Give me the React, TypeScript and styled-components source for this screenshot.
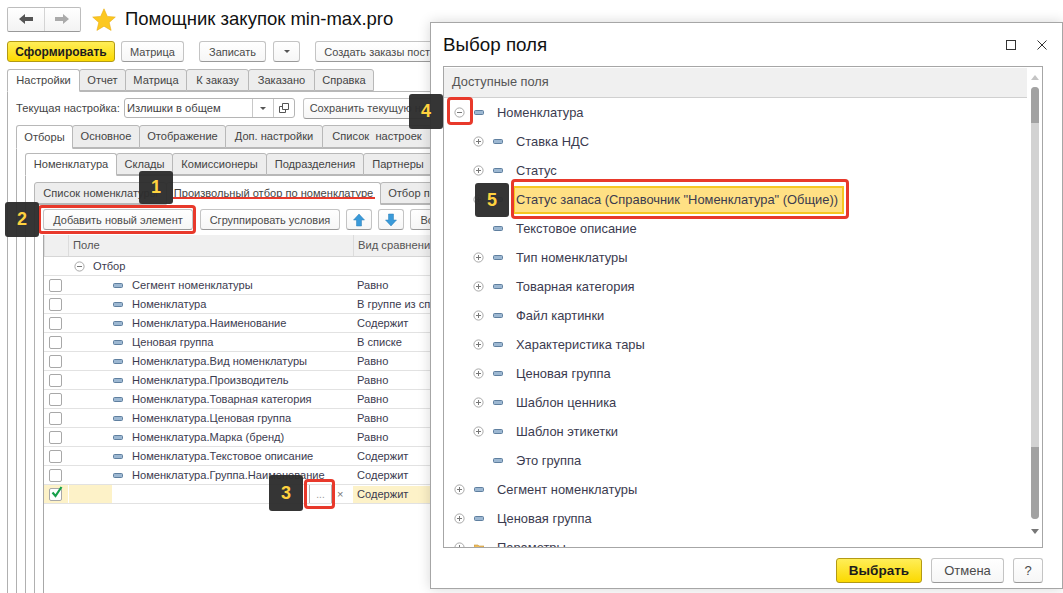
import React from 'react';
import styled, { createGlobalStyle, css } from 'styled-components';

const Global = createGlobalStyle`
  html, body { margin: 0; padding: 0; background: #fff; }
  body { font-family: "Liberation Sans", Arial, sans-serif; color: #3b3b4f; }
  * { box-sizing: border-box; }
`;

const Page = styled.div`
  position: relative;
  width: 1063px;
  height: 593px;
  overflow: hidden;
  background: #fff;
  padding: 7px 0 0 7px;
`;
const Header = styled.header`
  display: flex;
  align-items: center;
  height: 24px;
`;
const NavGroup = styled.div`
  display: flex;
  width: 74px;
  height: 25px;
  border: 1px solid #bdbdbd;
  border-bottom-color: #999;
  border-radius: 2px;
  background: linear-gradient(#fff, #f3f3f3);
`;
const NavButton = styled.div`
  flex: 1;
  display: flex;
  align-items: center;
  justify-content: center;
  & + & { border-left: 1px solid #d4d4d4; }
`;
const StarWrap = styled.div`
  display: flex;
  margin-left: 11px;
`;
const Title = styled.h1`
  margin: 0 0 0 9px;
  font-weight: 400;
  font-size: 18.5px;
  color: #111;
  white-space: nowrap;
`;
const Toolbar = styled.div`
  display: flex;
  margin-top: 10px;
  height: 21px;
`;
const Button = styled.div<{ $w: number; $ml?: number }>`
  flex: none;
  display: flex;
  align-items: center;
  justify-content: center;
  width: ${p => p.$w}px;
  height: 21px;
  margin-left: ${p => p.$ml ?? 0}px;
  border: 1px solid #c4c4c4;
  border-bottom-color: #9a9a9a;
  border-radius: 3px;
  background: linear-gradient(#fff, #f6f6f6);
  font-size: 11px;
  color: #4a4a4a;
  white-space: nowrap;
  overflow: hidden;
`;
const PrimaryButton = styled.div<{ $w: number; $h: number; $fs: number }>`
  flex: none;
  display: flex;
  align-items: center;
  justify-content: center;
  width: ${p => p.$w}px;
  height: ${p => p.$h}px;
  border: 1px solid #b39a14;
  border-radius: 3px;
  background: linear-gradient(#ffee58, #fbd900);
  font-weight: 700;
  font-size: ${p => p.$fs}px;
  color: #1c1c1c;
`;
const Caret = styled.span`
  width: 0;
  height: 0;
  border-left: 3px solid transparent;
  border-right: 3px solid transparent;
  border-top: 3px solid #555;
`;
const Tabs = styled.div<{ $mt: number; $h: number }>`
  display: flex;
  margin-top: ${p => p.$mt}px;
  height: ${p => p.$h}px;
  width: 1000px;
  position: relative;
  z-index: 1;
`;
const Tab = styled.div<{ $w: number; $active?: boolean }>`
  flex: none;
  display: flex;
  align-items: center;
  justify-content: center;
  width: ${p => p.$w}px;
  margin-right: -1px;
  padding-bottom: 1px;
  border: 1px solid #b8b8b8;
  border-radius: 3px 3px 0 0;
  font-size: 11.1px;
  color: #444;
  white-space: pre;
  overflow: hidden;
  ${p =>
    p.$active
      ? css`
          background: #fff;
          border-bottom: 1px solid #fff;
          height: calc(100% + 1px);
        `
      : css`
          background: #ededed;
          height: 100%;
        `}
`;
const Frame = styled.div<{ $pt: number }>`
  border-left: 1px solid #b0b0b0;
  border-top: 1px solid #b8b8b8;
  padding: ${p => p.$pt}px 0 0 8px;
  height: 600px;
`;
const SettingRow = styled.div`
  display: flex;
  align-items: center;
  height: 20px;
`;
const SettingLabel = styled.span`
  width: 108px;
  font-size: 11.2px;
  color: #444;
  white-space: nowrap;
`;
const Select = styled.div`
  display: flex;
  width: 171px;
  height: 20px;
  border: 1px solid #b5b5b5;
  border-radius: 3px;
  font-size: 11.2px;
  color: #444;
`;
const SelectValue = styled.div`
  flex: 1;
  padding-left: 2px;
  line-height: 18px;
`;
const SelectCell = styled.div`
  width: 21px;
  display: flex;
  align-items: center;
  justify-content: center;
  border-left: 1px solid #c8c8c8;
`;
const Actions = styled.div`
  display: flex;
  height: 21px;
`;
const Table = styled.div`
  margin-top: 5px;
  border-left: 1px solid #a8a8a8;
  height: 400px;
  width: 400px;
`;
const TableHead = styled.div`
  display: grid;
  grid-template-columns: 24px 285px 1fr;
  height: 22px;
  background: #f0f0f0;
  font-size: 11.2px;
  color: #555;
  border-bottom: 1px solid #d6d6d6;
`;
const HeadCell = styled.div<{ $pl?: number }>`
  padding-left: ${p => p.$pl ?? 0}px;
  line-height: 20px;
  border-left: 1px solid #dcdcdc;
  white-space: nowrap;
  overflow: hidden;
`;
const GroupRow = styled.div`
  display: flex;
  align-items: center;
  gap: 8px;
  height: 19px;
  padding-left: 30px;
  font-size: 11.1px;
  border-bottom: 1px solid #e2e2e2;
`;
const Row = styled.div`
  display: grid;
  grid-template-columns: 24px 285px 1fr;
  align-items: center;
  height: 19px;
  font-size: 11.1px;
  white-space: nowrap;
  border-bottom: 1px solid #e2e2e2;
`;
const CheckCell = styled.div<{ $editing?: boolean }>`
  display: flex;
  align-items: center;
  justify-content: center;
  height: 100%;
  padding-right: 1px;
  background: ${p => (p.$editing ? '#fdf2c8' : 'transparent')};
`;
const CheckBox = styled.div`
  position: relative;
  width: 13px;
  height: 13px;
  border: 1px solid #a8a8a8;
  border-radius: 2px;
  background: #fff;
`;
const CheckMark = styled.svg`
  position: absolute;
  left: 0;
  top: -4px;
`;
const FieldCell = styled.div`
  display: flex;
  align-items: center;
  padding-left: 45px;
  gap: 9px;
`;
const CompareCell = styled.div<{ $editing?: boolean }>`
  padding-left: 4px;
  line-height: 17px;
  background: ${p => (p.$editing ? '#fdf2c8' : 'transparent')};
`;
const EditCell = styled.div`
  display: flex;
  align-items: center;
  height: 100%;
`;
const EditYellow = styled.div`
  width: 43px;
  height: 100%;
  margin-left: 1px;
  background: #fdf2c8;
`;
const PickButton = styled.div`
  width: 23px;
  height: 18px;
  margin-left: 197px;
  border-left: 1px solid #b4b4b4;
  border-right: 1px solid #b4b4b4;
  text-align: center;
  font-size: 10px;
  color: #999;
  line-height: 20px;
`;
const Clear = styled.span`
  margin-left: 5px;
  font-size: 11px;
  color: #777;
`;
const Dialog = styled.section`
  position: absolute;
  left: 430px;
  top: 22px;
  width: 633px;
  height: 567px;
  display: flex;
  flex-direction: column;
  padding: 0 19px 0 12px;
  background: #fff;
  border: 1px solid #a6a6a6;
  box-shadow: 0 0 12px rgba(0, 0, 0, 0.16);
  z-index: 2;
`;
const DialogTop = styled.div`
  display: flex;
  align-items: center;
  justify-content: space-between;
  height: 43px;
  flex: none;
`;
const DialogTitle = styled.h2`
  margin: 0;
  font-weight: 400;
  font-size: 18.8px;
  color: #111;
`;
const WindowButtons = styled.div`
  display: flex;
  align-items: center;
  gap: 21px;
  margin-right: -4px;
`;
const Panel = styled.div`
  position: relative;
  display: flex;
  height: 482px;
  flex: none;
  border: 1px solid #a6a6a6;
  overflow: hidden;
`;
const TreeArea = styled.div`
  flex: 1;
  min-width: 0;
`;
const TreeHead = styled.div`
  height: 30px;
  margin-top: 1px;
  padding-left: 8px;
  background: #f0f0f0;
  border-bottom: 1px solid #d0d0d0;
  font-size: 12.8px;
  line-height: 28px;
  color: #555;
`;
const TreeRow = styled.div<{ $level: number }>`
  display: flex;
  align-items: center;
  height: 29px;
  padding-left: ${p => 10 + p.$level * 19}px;
  font-size: 12.9px;
  white-space: nowrap;
`;
const Expander = styled.div`
  width: 13px;
  flex: none;
  display: flex;
`;
const NodeIcon = styled.div`
  width: 30px;
  flex: none;
  display: flex;
  padding-left: 7px;
`;
const NodeText = styled.span<{ $selected?: boolean }>`
  margin-left: ${p => (p.$selected ? -3 : 0)}px;
  ${p =>
    p.$selected &&
    css`
      display: block;
      width: 331px;
      height: 28px;
      padding-left: 1px;
      line-height: 24px;
      border: 2px solid #f6c622;
      background: #ffe084;
    `}
`;
const Scrollbar = styled.div`
  position: relative;
  width: 15px;
  flex: none;
  padding-top: 8px;
  display: flex;
  flex-direction: column;
  align-items: center;
`;
const ScrollArrow = styled.span<{ $down?: boolean }>`
  width: 0;
  height: 0;
  border-left: 4px solid transparent;
  border-right: 4px solid transparent;
  ${p =>
    p.$down
      ? css`
          margin-top: 10px;
          border-top: 5px solid #777;
        `
      : css`
          margin-bottom: 7px;
          border-bottom: 5px solid #c4c4c4;
        `}
`;
const ScrollTrack = styled.div`
  width: 8px;
  height: 432px;
  border-radius: 4px;
  overflow: hidden;
  background: #d2d2d2;
`;
const ScrollThumb = styled.div<{ $h: number; $mt?: number }>`
  height: ${p => p.$h}px;
  margin-top: ${p => p.$mt ?? 0}px;
  background: #a2a2a2;
`;
const Footer = styled.div`
  display: flex;
  justify-content: flex-end;
  gap: 9px;
  margin-top: 10px;
`;
const DialogButton = styled.div<{ $w: number }>`
  display: flex;
  align-items: center;
  justify-content: center;
  width: ${p => p.$w}px;
  height: 25px;
  border: 1px solid #c4c4c4;
  border-bottom-color: #9a9a9a;
  border-radius: 3px;
  background: linear-gradient(#fff, #f6f6f6);
  font-size: 13px;
  color: #4a4a4a;
`;
const Callout = styled.div<{ $x: number; $y: number; $h: number }>`
  position: absolute;
  left: ${p => p.$x}px;
  top: ${p => p.$y}px;
  width: 34px;
  height: ${p => p.$h}px;
  display: flex;
  align-items: center;
  justify-content: center;
  border-radius: 3px;
  background: rgba(45, 45, 45, 0.96);
  color: #ffd23f;
  font-weight: 700;
  font-size: 18px;
  z-index: 5;
`;
const RedBox = styled.div<{ $x: number; $y: number; $w: number; $h: number }>`
  position: absolute;
  left: ${p => p.$x}px;
  top: ${p => p.$y}px;
  width: ${p => p.$w}px;
  height: ${p => p.$h}px;
  border: 3px solid #e8392b;
  border-radius: 4px;
  z-index: 4;
`;
const RedLine = styled.div`
  position: absolute;
  left: 173px;
  top: 197px;
  width: 202px;
  height: 2px;
  background: #e8392b;
  z-index: 4;
`;

const PlusIcon = () => (
  <svg width="11" height="11" viewBox="0 0 11 11">
    <circle cx="5.5" cy="5.5" r="4.6" fill="#fff" stroke="#a8a8a8" />
    <path d="M3 5.5h5M5.5 3v5" stroke="#777" />
  </svg>
);

const MinusIcon = () => (
  <svg width="11" height="11" viewBox="0 0 11 11">
    <circle cx="5.5" cy="5.5" r="4.6" fill="#fff" stroke="#a8a8a8" />
    <path d="M3 5.5h5" stroke="#777" />
  </svg>
);

const FieldIcon = () => (
  <svg width="10" height="5" viewBox="0 0 10 5">
    <rect x="0.5" y="0.5" width="9" height="4" rx="1" fill="#9db8d2" stroke="#5f7f9f" />
  </svg>
);

const FolderIcon = () => (
  <svg width="10" height="8" viewBox="0 0 10 8">
    <path d="M0 1h4l1 1h5v6H0z" fill="#eebd5c" stroke="#c8953a" strokeWidth="0.6" />
  </svg>
);

const ArrowIcon = ({ dir }: { dir: 'up' | 'down' }) => (
  <svg width="12" height="14" viewBox="0 0 12 14">
    <path
      d={dir === 'up' ? 'M6 1l5.5 6H8.5v6h-5V7H.5z' : 'M6 13L.5 7h3V1h5v6h3z'}
      fill="#3a9ad9"
      stroke="#2b7fb8"
      strokeWidth="0.5"
    />
  </svg>
);

const topTabs = [
  { t: 'Настройки', w: 73, active: true },
  { t: 'Отчет', w: 47 },
  { t: 'Матрица', w: 62 },
  { t: 'К заказу', w: 63 },
  { t: 'Заказано', w: 67 },
  { t: 'Справка', w: 60 },
];
const settingTabs = [
  { t: 'Отборы', w: 57, active: true },
  { t: 'Основное', w: 68 },
  { t: 'Отображение', w: 87 },
  { t: 'Доп. настройки', w: 98 },
  { t: 'Список  настроек', w: 110 },
];
const filterTabs = [
  { t: 'Номенклатура', w: 92, active: true },
  { t: 'Склады', w: 57 },
  { t: 'Комиссионеры', w: 95 },
  { t: 'Подразделения', w: 98 },
  { t: 'Партнеры', w: 70 },
];
const subTabs = [
  { t: 'Список номенклатуры', w: 133 },
  { t: 'Произвольный отбор по номенклатуре', w: 215, active: true },
  { t: 'Отбор по', w: 64 },
];

const filterRows = [
  ['Сегмент номенклатуры', 'Равно'],
  ['Номенклатура', 'В группе из списка'],
  ['Номенклатура.Наименование', 'Содержит'],
  ['Ценовая группа', 'В списке'],
  ['Номенклатура.Вид номенклатуры', 'Равно'],
  ['Номенклатура.Производитель', 'Равно'],
  ['Номенклатура.Товарная категория', 'Равно'],
  ['Номенклатура.Ценовая группа', 'Равно'],
  ['Номенклатура.Марка (бренд)', 'Равно'],
  ['Номенклатура.Текстовое описание', 'Содержит'],
  ['Номенклатура.Группа.Наименование', 'Содержит'],
];

type TreeItem = {
  text: string;
  level: number;
  mark?: 'plus' | 'minus';
  folder?: boolean;
  selected?: boolean;
};

const treeItems: TreeItem[] = [
  { text: 'Номенклатура', level: 0, mark: 'minus' },
  { text: 'Ставка НДС', level: 1, mark: 'plus' },
  { text: 'Статус', level: 1, mark: 'plus' },
  { text: 'Статус запаса (Справочник "Номенклатура" (Общие))', level: 1, mark: 'plus', selected: true },
  { text: 'Текстовое описание', level: 1 },
  { text: 'Тип номенклатуры', level: 1, mark: 'plus' },
  { text: 'Товарная категория', level: 1, mark: 'plus' },
  { text: 'Файл картинки', level: 1, mark: 'plus' },
  { text: 'Характеристика тары', level: 1, mark: 'plus' },
  { text: 'Ценовая группа', level: 1, mark: 'plus' },
  { text: 'Шаблон ценника', level: 1, mark: 'plus' },
  { text: 'Шаблон этикетки', level: 1, mark: 'plus' },
  { text: 'Это группа', level: 1 },
  { text: 'Сегмент номенклатуры', level: 0, mark: 'plus' },
  { text: 'Ценовая группа', level: 0, mark: 'plus' },
  { text: 'Параметры', level: 0, mark: 'plus', folder: true },
];

function TabBar({ items, mt, h }: { items: { t: string; w: number; active?: boolean }[]; mt: number; h: number }) {
  return (
    <Tabs $mt={mt} $h={h}>
      {items.map(item => (
        <Tab key={item.t} $w={item.w} $active={item.active}>
          {item.t}
        </Tab>
      ))}
    </Tabs>
  );
}

export default function App() {
  return (
    <Page>
      <Global />
      <Header>
        <NavGroup>
          <NavButton>
            <svg width="14" height="10" viewBox="0 0 14 10">
              <path d="M0 5l6-5v3h8v4H6v3z" fill="#555" />
            </svg>
          </NavButton>
          <NavButton>
            <svg width="14" height="10" viewBox="0 0 14 10">
              <path d="M14 5L8 0v3H0v4h8v3z" fill="#aaa" />
            </svg>
          </NavButton>
        </NavGroup>
        <StarWrap>
          <svg width="24" height="23" viewBox="0 0 24 23">
            <path
              d="M12 .8l3.3 7.6 8 .7-6.1 5.3 1.9 8L12 18.2l-7.1 4.2 1.9-8L.7 9.1l8-.7z"
              fill="#fcc820"
              stroke="#e9ad12"
              strokeWidth="0.6"
            />
          </svg>
        </StarWrap>
        <Title>Помощник закупок min-max.pro</Title>
      </Header>

      <Toolbar>
        <PrimaryButton $w={108} $h={21} $fs={12}>Сформировать</PrimaryButton>
        <Button $w={63} $ml={6}>Матрица</Button>
        <Button $w={67} $ml={15}>Записать</Button>
        <Button $w={27} $ml={7}><Caret /></Button>
        <Button $w={170} $ml={15}>Создать заказы поставщикам</Button>
      </Toolbar>

      <TabBar items={topTabs} mt={7} h={22} />
      <Frame $pt={6}>
        <SettingRow>
          <SettingLabel>Текущая настройка:</SettingLabel>
          <Select>
            <SelectValue>Излишки в общем</SelectValue>
            <SelectCell><Caret /></SelectCell>
            <SelectCell>
              <svg width="10" height="10" viewBox="0 0 10 10" fill="none" stroke="#555">
                <path d="M3.5.5h6v6h-6zM3.5 3.5h-3v6h6v-3" />
              </svg>
            </SelectCell>
          </Select>
          <Button $w={170} $ml={8}>Сохранить текущую настройку</Button>
        </SettingRow>

        <TabBar items={settingTabs} mt={7} h={23} />
        <Frame $pt={4}>
          <TabBar items={filterTabs} mt={0} h={22} />
          <Frame $pt={6}>
            <TabBar items={subTabs} mt={0} h={22} />
            <Frame $pt={4}>
              <Actions>
                <Button $w={150}>Добавить новый элемент</Button>
                <Button $w={140} $ml={7}>Сгруппировать условия</Button>
                <Button $w={26} $ml={6}><ArrowIcon dir="up" /></Button>
                <Button $w={26} $ml={6}><ArrowIcon dir="down" /></Button>
                <Button $w={40} $ml={6}>Вос</Button>
              </Actions>
              <Table>
                <TableHead>
                  <HeadCell />
                  <HeadCell $pl={4}>Поле</HeadCell>
                  <HeadCell $pl={4}>Вид сравнения</HeadCell>
                </TableHead>
                <GroupRow>
                  <MinusIcon />
                  <span>Отбор</span>
                </GroupRow>
                {filterRows.map(([field, compare]) => (
                  <Row key={field}>
                    <CheckCell><CheckBox /></CheckCell>
                    <FieldCell>
                      <FieldIcon />
                      <span>{field}</span>
                    </FieldCell>
                    <CompareCell>{compare}</CompareCell>
                  </Row>
                ))}
                <Row>
                  <CheckCell $editing>
                    <CheckBox>
                      <CheckMark width="14" height="14" viewBox="0 0 14 14">
                        <path d="M2.5 7.5l3 3.5 6-9" fill="none" stroke="#16a04a" strokeWidth="2.2" />
                      </CheckMark>
                    </CheckBox>
                  </CheckCell>
                  <EditCell>
                    <EditYellow />
                    <PickButton>...</PickButton>
                    <Clear>×</Clear>
                  </EditCell>
                  <CompareCell $editing>Содержит</CompareCell>
                </Row>
              </Table>
            </Frame>
          </Frame>
        </Frame>
      </Frame>

      <Dialog>
        <DialogTop>
          <DialogTitle>Выбор поля</DialogTitle>
          <WindowButtons>
            <svg width="10" height="10" viewBox="0 0 10 10">
              <rect x="0.5" y="0.5" width="9" height="9" fill="none" stroke="#333" />
            </svg>
            <svg width="10" height="10" viewBox="0 0 10 10">
              <path d="M.5.5l9 9M9.5.5l-9 9" stroke="#333" />
            </svg>
          </WindowButtons>
        </DialogTop>
        <Panel>
          <TreeArea>
            <TreeHead>Доступные поля</TreeHead>
            {treeItems.map(item => (
              <TreeRow key={item.text + item.level} $level={item.level}>
                <Expander>
                  {item.mark === 'plus' && <PlusIcon />}
                  {item.mark === 'minus' && <MinusIcon />}
                </Expander>
                <NodeIcon>{item.folder ? <FolderIcon /> : <FieldIcon />}</NodeIcon>
                <NodeText $selected={item.selected}>{item.text}</NodeText>
              </TreeRow>
            ))}
          </TreeArea>
          <Scrollbar>
            <ScrollArrow />
            <ScrollTrack>
              <ScrollThumb $h={36} />
              <ScrollThumb $h={72} $mt={324} />
            </ScrollTrack>
            <ScrollArrow $down />
          </Scrollbar>
        </Panel>
        <Footer>
          <PrimaryButton $w={86} $h={25} $fs={13.5}>Выбрать</PrimaryButton>
          <DialogButton $w={73}>Отмена</DialogButton>
          <DialogButton $w={30}>?</DialogButton>
        </Footer>
      </Dialog>

      <RedLine />
      <RedBox $x={38} $y={205} $w={158} $h={29} />
      <RedBox $x={304} $y={479} $w={31} $h={30} />
      <RedBox $x={447} $y={97} $w={26} $h={28} />
      <RedBox $x={511} $y={179} $w={338} $h={40} />
      <Callout $x={139} $y={171} $h={33}>1</Callout>
      <Callout $x={5} $y={202} $h={35}>2</Callout>
      <Callout $x={269} $y={475} $h={36}>3</Callout>
      <Callout $x={409} $y={94} $h={35}>4</Callout>
      <Callout $x={475} $y={183} $h={34}>5</Callout>
    </Page>
  );
}
